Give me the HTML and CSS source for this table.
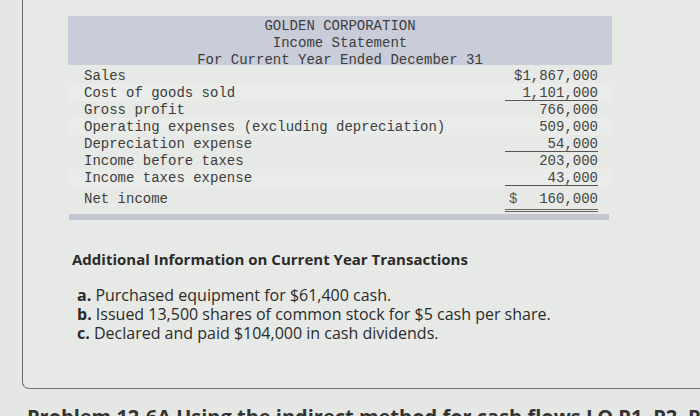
FILE: index.html
```
<!DOCTYPE html>
<html>
<head>
<meta charset="utf-8">
<link rel="stylesheet" href="styles.css">
</head>
<body>
<div class="panel">
  <div class="statement">
    <div class="head">
      <div>GOLDEN CORPORATION</div>
      <div>Income Statement</div>
      <div>For Current Year Ended December 31</div>
    </div>
    <div class="row first"><span>Sales</span><span class="val">$1,867,000</span></div>
    <div class="row alt"><span>Cost of goods sold</span><span class="val line">1,101,000</span></div>
    <div class="row"><span>Gross profit</span><span class="val">766,000</span></div>
    <div class="row alt"><span>Operating expenses (excluding depreciation)</span><span class="val">509,000</span></div>
    <div class="row"><span>Depreciation expense</span><span class="val line">54,000</span></div>
    <div class="row"><span>Income before taxes</span><span class="val">203,000</span></div>
    <div class="row alt"><span>Income taxes expense</span><span class="val line">43,000</span></div>
    <div class="row net"><span>Net income</span><span class="val dbl"><span class="cur">$</span><span>160,000</span></span></div>
    <div class="foot"></div>
  </div>
  <div class="info">
    <h3 class="info-title">Additional Information on Current Year Transactions</h3>
    <ol class="items">
      <li><b>a.</b> Purchased equipment for $61,400 cash.</li>
      <li><b>b.</b> Issued 13,500 shares of common stock for $5 cash per share.</li>
      <li><b>c.</b> Declared and paid $104,000 in cash dividends.</li>
    </ol>
  </div>
</div>
<div class="next">Problem 12-6A Using the indirect method for cash flows LO P1, P2, P3</div>
</body>
</html>
```
FILE: styles.css
```
html, body {
  margin: 0;
  padding: 0;
}
body {
  width: 700px;
  height: 416px;
  overflow: hidden;
  background: #e5e7e4;
  color: #333;
}
.panel {
  margin-left: 22px;
  width: 720px;
  height: 372px;
  border-left: 1px solid #6a6c6c;
  border-bottom: 1px solid #727474;
  border-bottom-left-radius: 7px;
  padding-top: 16px;
  box-sizing: content-box;
  background: #e7e9e6;
}
.statement {
  margin-left: 45px;
  width: 544px;
  font-family: "Liberation Mono", "Courier New", monospace;
  font-size: 14px;
  color: #3d3d3d;
}
.head {
  background: #c9ccd9;
  height: 49px;
  padding-top: 2px;
  box-sizing: border-box;
  text-align: center;
  line-height: 17px;
}
.row {
  display: flex;
  justify-content: space-between;
  align-items: flex-start;
  height: 17px;
  box-sizing: border-box;
  line-height: 15px;
  padding-top: 2px;
  padding-left: 16px;
  padding-right: 14px;
}
.row.first {
  margin-top: 2px;
}
.row.alt {
  background: #eaece9;
}
.val {
  display: flex;
  width: 93px;
  justify-content: flex-end;
  height: 15px;
  box-sizing: border-box;
  color: #444;
}
.val.line {
  border-bottom: 1px solid #555;
}
.row.net {
  height: 28px;
  padding-top: 6px;
}
.val.dbl {
  justify-content: space-between;
  height: 20px;
  border-bottom: 3px double #666;
  padding-left: 4px;
}
.cur {
  color: #555;
}
.foot {
  margin-left: 1px;
  width: 540px;
  height: 6px;
  background: #c3c6d1;
}
.info {
  margin-left: 49px;
  font-family: "Open Sans", Lato, sans-serif;
  color: #2b2b2b;
}
.info-title {
  margin: 29px 0 0 0;
  font-size: 15px;
  font-weight: 700;
  line-height: 20px;
}
.items {
  list-style: none;
  margin: 17px 0 0 5px;
  padding: 0;
  font-size: 16px;
  line-height: 19px;
}
.items b {
  font-weight: 700;
}
.next {
  margin: 16px 0 0 27px;
  font-family: "Open Sans", Lato, sans-serif;
  font-size: 20px;
  font-weight: 700;
  color: #333;
  white-space: nowrap;
  line-height: 24px;
}
```
